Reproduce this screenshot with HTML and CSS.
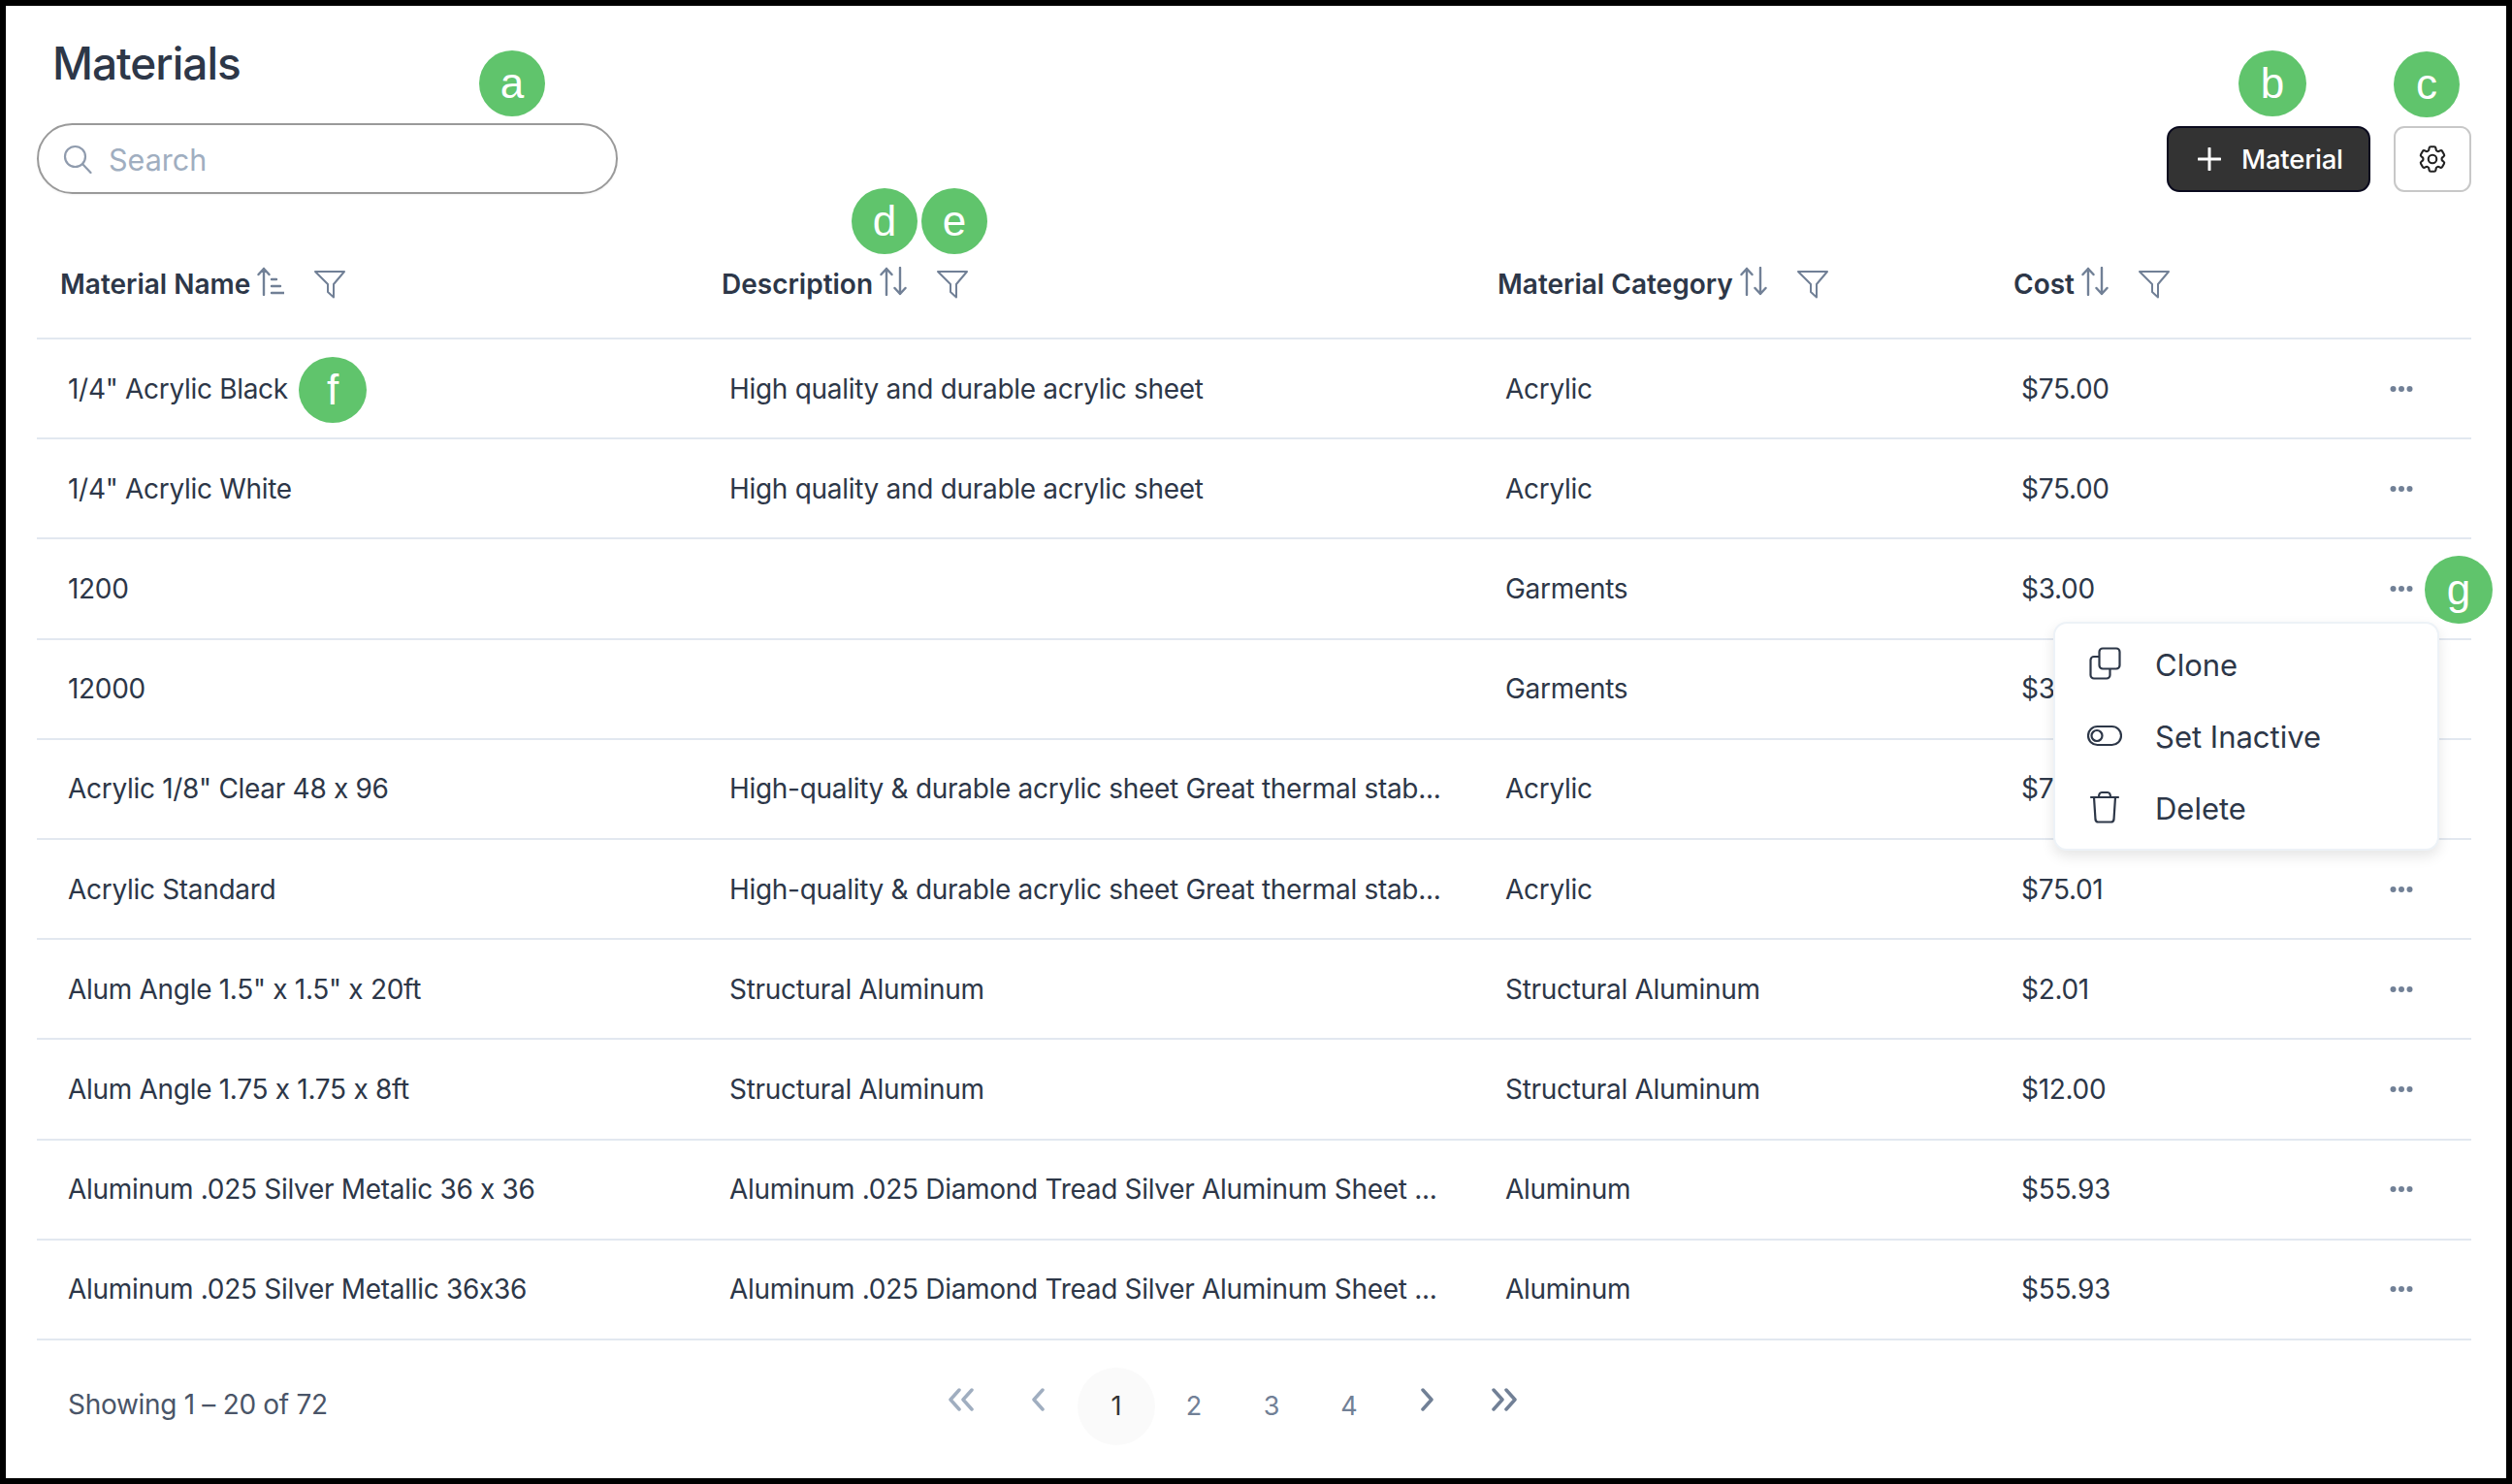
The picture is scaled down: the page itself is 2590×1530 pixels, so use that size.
FILE: index.html
```html
<!DOCTYPE html>
<html lang="en">
<head>
  <meta charset="UTF-8" />
  <title>Materials</title>
  <link rel="stylesheet" href="styles.css">
</head>
<body>
  <svg class="sprites" width="0" height="0">
    <symbol id="i-sort" viewBox="0 0 28 30">
      <path d="M7 29V2M1.500 8L7 2l5.500 6M21 1v27M15.500 22l5.500 6 5.500-6" fill="none" stroke="currentColor" stroke-width="2.400" stroke-linecap="round" stroke-linejoin="round" />
    </symbol>
    <symbol id="i-filter" viewBox="0 0 34 30">
      <path d="M2 2H32L21 15V28.500L15 23V15Z" fill="none" stroke="currentColor" stroke-width="2" stroke-linejoin="round" />
    </symbol>
    <symbol id="i-dots" viewBox="0 0 24 8">
      <circle cx="3.500" cy="4" r="3" fill="currentColor" />
      <circle cx="12" cy="4" r="3" fill="currentColor" />
      <circle cx="20.500" cy="4" r="3" fill="currentColor" />
    </symbol>
  </svg>

  <div class="page">
    <h1 class="title">Materials</h1>

    <div class="toolbar">
      <div class="search">
        <svg class="search-icon" viewBox="0 0 30 30"><circle cx="12.500" cy="12.500" r="10.500" fill="none" stroke="currentColor" stroke-width="2.200" /><path d="M20 20L28.500 29" fill="none" stroke="currentColor" stroke-width="2.200" stroke-linecap="round" /></svg>
        <span class="search-text">Search</span>
      </div>
      <div class="toolbar-actions">
        <button class="btn-add">
          <svg class="plus-icon" viewBox="0 0 24 24"><path d="M12 1V23M1 12H23" fill="none" stroke="currentColor" stroke-width="3" stroke-linecap="round" /></svg>
          Material
        </button>
        <button class="btn-settings">
          <svg class="gear-icon" viewBox="0 0 24 24" fill="none" stroke="currentColor" stroke-width="1.500" stroke-linecap="round" stroke-linejoin="round"><path d="M9.594 3.94c.09-.542.56-.94 1.11-.94h2.593c.55 0 1.02.398 1.11.94l.213 1.281c.063.374.313.686.645.87.074.04.147.083.22.127.324.196.72.257 1.075.124l1.217-.456a1.125 1.125 0 011.37.49l1.296 2.247a1.125 1.125 0 01-.26 1.431l-1.003.827c-.293.24-.438.613-.431.992a6.759 6.759 0 010 .255c-.007.378.138.75.43.99l1.005.828c.424.35.534.954.26 1.43l-1.298 2.247a1.125 1.125 0 01-1.369.491l-1.217-.456c-.355-.133-.75-.072-1.076.124a6.57 6.57 0 01-.22.128c-.331.183-.581.495-.644.869l-.213 1.28c-.09.543-.56.941-1.11.941h-2.594c-.55 0-1.02-.398-1.11-.94l-.213-1.281c-.062-.374-.312-.686-.644-.87a6.52 6.52 0 01-.22-.127c-.325-.196-.72-.257-1.076-.124l-1.217.456a1.125 1.125 0 01-1.369-.49l-1.297-2.247a1.125 1.125 0 01.26-1.431l1.004-.827c.292-.24.437-.613.43-.992a6.932 6.932 0 010-.255c.007-.378-.138-.75-.43-.99l-1.004-.828a1.125 1.125 0 01-.26-1.43l1.297-2.247a1.125 1.125 0 011.37-.491l1.216.456c.356.133.751.072 1.076-.124.072-.044.146-.087.22-.128.332-.183.582-.495.644-.869l.214-1.281z" /><path d="M15 12a3 3 0 11-6 0 3 3 0 016 0z" /></svg>
        </button>
      </div>
    </div>

    <div class="head-row">
      <div class="head-cell">
        <span>Material Name</span>
        <svg class="sort-icon" viewBox="0 0 28 30"><path d="M7 29V2M1.500 8L7 2l5.500 6M15 13h5M15 20h9M15 27h13" fill="none" stroke="currentColor" stroke-width="2.400" stroke-linecap="round" stroke-linejoin="round" /></svg>
        <svg class="filter-icon"><use href="#i-filter" /></svg>
      </div>
      <div class="head-cell">
        <span>Description</span>
        <svg class="sort-icon"><use href="#i-sort" /></svg>
        <svg class="filter-icon"><use href="#i-filter" /></svg>
      </div>
      <div class="head-cell">
        <span>Material Category</span>
        <svg class="sort-icon"><use href="#i-sort" /></svg>
        <svg class="filter-icon"><use href="#i-filter" /></svg>
      </div>
      <div class="head-cell">
        <span>Cost</span>
        <svg class="sort-icon"><use href="#i-sort" /></svg>
        <svg class="filter-icon"><use href="#i-filter" /></svg>
      </div>
      <div></div>
    </div>

    <div class="row">
      <div>1/4" Acrylic Black</div>
      <div>High quality and durable acrylic sheet</div>
      <div>Acrylic</div>
      <div>$75.00</div>
      <svg class="dots"><use href="#i-dots" /></svg>
    </div>
    <div class="row">
      <div>1/4" Acrylic White</div>
      <div>High quality and durable acrylic sheet</div>
      <div>Acrylic</div>
      <div>$75.00</div>
      <svg class="dots"><use href="#i-dots" /></svg>
    </div>
    <div class="row">
      <div>1200</div>
      <div></div>
      <div>Garments</div>
      <div>$3.00</div>
      <svg class="dots"><use href="#i-dots" /></svg>
    </div>
    <div class="row">
      <div>12000</div>
      <div></div>
      <div>Garments</div>
      <div>$3.00</div>
      <svg class="dots"><use href="#i-dots" /></svg>
    </div>
    <div class="row">
      <div>Acrylic 1/8" Clear 48 x 96</div>
      <div>High-quality &amp; durable acrylic sheet Great thermal stab...</div>
      <div>Acrylic</div>
      <div>$75.00</div>
      <svg class="dots"><use href="#i-dots" /></svg>
    </div>
    <div class="row">
      <div>Acrylic Standard</div>
      <div>High-quality &amp; durable acrylic sheet Great thermal stab...</div>
      <div>Acrylic</div>
      <div>$75.01</div>
      <svg class="dots"><use href="#i-dots" /></svg>
    </div>
    <div class="row">
      <div>Alum Angle 1.5" x 1.5" x 20ft</div>
      <div>Structural Aluminum</div>
      <div>Structural Aluminum</div>
      <div>$2.01</div>
      <svg class="dots"><use href="#i-dots" /></svg>
    </div>
    <div class="row">
      <div>Alum Angle 1.75 x 1.75 x 8ft</div>
      <div>Structural Aluminum</div>
      <div>Structural Aluminum</div>
      <div>$12.00</div>
      <svg class="dots"><use href="#i-dots" /></svg>
    </div>
    <div class="row">
      <div>Aluminum .025 Silver Metalic 36 x 36</div>
      <div>Aluminum .025 Diamond Tread Silver Aluminum Sheet ...</div>
      <div>Aluminum</div>
      <div>$55.93</div>
      <svg class="dots"><use href="#i-dots" /></svg>
    </div>
    <div class="row">
      <div>Aluminum .025 Silver Metallic 36x36</div>
      <div>Aluminum .025 Diamond Tread Silver Aluminum Sheet ...</div>
      <div>Aluminum</div>
      <div>$55.93</div>
      <svg class="dots"><use href="#i-dots" /></svg>
    </div>

    <div class="footer">
      <div class="showing">Showing 1 – 20 of 72</div>
      <div class="pager">
        <span class="pg pg-off"><svg class="chev" viewBox="0 0 28 24"><path d="M12 2L3 12l9 10M25 2l-9 10 9 10" /></svg></span>
        <span class="pg pg-off"><svg class="chev" viewBox="0 0 28 24"><path d="M18 2L9 12l9 10" /></svg></span>
        <span class="pg pg-current">1</span>
        <span class="pg">2</span>
        <span class="pg">3</span>
        <span class="pg">4</span>
        <span class="pg"><svg class="chev" viewBox="0 0 28 24"><path d="M10 2l9 10-9 10" /></svg></span>
        <span class="pg"><svg class="chev" viewBox="0 0 28 24"><path d="M3 2l9 10-9 10M16 2l9 10-9 10" /></svg></span>
      </div>
    </div>
  </div>

  <div class="menu">
    <div class="menu-item">
      <svg class="menu-icon" viewBox="0 0 36 36"><rect x="12.500" y="1.500" width="21" height="21" rx="3.500" /><path d="M12 10H7a3.500 3.500 0 0 0-3.500 3.500V29A3.500 3.500 0 0 0 7 32.500h13a3.500 3.500 0 0 0 3.500-3.500V23" /></svg>
      Clone
    </div>
    <div class="menu-item">
      <svg class="menu-icon" viewBox="0 0 36 36"><rect x="1" y="8" width="34" height="19" rx="9.500" /><circle cx="10" cy="17.500" r="5.500" /></svg>
      Set Inactive
    </div>
    <div class="menu-item">
      <svg class="menu-icon" viewBox="0 0 36 36"><path d="M4 7H32M7 7l1.500 23a3 3 0 0 0 3 2.500h13a3 3 0 0 0 3-2.500L29 7M12 7c0-3 1-5 3-5h6c2 0 3 2 3 5" /></svg>
      Delete
    </div>
  </div>

  <span class="badge badge-a">a</span>
  <span class="badge badge-b">b</span>
  <span class="badge badge-c">c</span>
  <span class="badge badge-d">d</span>
  <span class="badge badge-e">e</span>
  <span class="badge badge-f">f</span>
  <span class="badge badge-g">g</span>
</body>
</html>
```

FILE: styles.css
```css
:root {
  --text: #2d3748;
  --muted: #718096;
  --faint: #a0aec0;
  --line: #e2e8f0;
  --green: #60c46c;
}

html, body {
  height: 100%;
}

body {
  margin: 0;
  background: #000;
  font-family: Inter, "Noto Sans", sans-serif;
  font-feature-settings: "calt" 0;
  color: var(--text);
  overflow: hidden;
}

.sprites {
  position: absolute;
}

.page {
  margin: 6px;
  height: 1518px;
  box-sizing: border-box;
  padding: 0 36px 0 32px;
  background: #fff;
}

.title {
  margin: 0;
  padding: 30px 0 0 16px;
  height: 121px;
  box-sizing: border-box;
  font-size: 46px;
  line-height: 58px;
  font-weight: 500;
  letter-spacing: -1px;
}

.toolbar {
  display: flex;
  justify-content: space-between;
  align-items: center;
  height: 73px;
}

.search {
  display: flex;
  align-items: center;
  width: 599px;
  height: 73px;
  box-sizing: border-box;
  padding-left: 25px;
  border: 2px solid #9a9a9a;
  border-radius: 37px;
  box-shadow: 0 1px 2px rgba(0, 0, 0, 0.05);
}

.search-icon {
  width: 30px;
  height: 30px;
  color: #8f9bad;
}

.search-text {
  margin: 1px 0 0 17px;
  font-size: 30.500px;
  color: var(--faint);
}

.toolbar-actions {
  display: flex;
  gap: 24px;
  margin-top: 1px;
}

.btn-add {
  display: flex;
  align-items: center;
  gap: 21px;
  width: 210px;
  height: 68px;
  padding: 0 0 0 30px;
  box-sizing: border-box;
  background: #333;
  border: 2px solid #0a0a1e;
  border-radius: 13px;
  color: #fff;
  font-family: inherit;
  font-size: 27.500px;
  font-weight: 500;
  letter-spacing: -0.2px;
}

.plus-icon {
  width: 24px;
  height: 24px;
}

.btn-settings {
  display: flex;
  align-items: center;
  justify-content: center;
  width: 80px;
  height: 68px;
  padding: 0;
  background: #fff;
  border: 2px solid #c8c8c8;
  border-radius: 11px;
  color: #222;
}

.gear-icon {
  width: 34px;
  height: 34px;
}

.head-row, .row {
  display: grid;
  align-items: center;
  box-sizing: border-box;
  border-bottom: 2px solid var(--line);
}

.head-row {
  grid-template-columns: 682px 800px 532px 348px 148px;
  height: 150px;
  padding-top: 37px;
}

.head-cell {
  display: flex;
  align-items: center;
  padding-left: 24px;
  font-size: 28px;
  font-weight: 600;
}

.sort-icon {
  width: 28px;
  height: 30px;
  margin: -6px 0 0 7px;
  color: var(--muted);
}

.filter-icon {
  width: 34px;
  height: 30px;
  margin-left: 30px;
  color: var(--muted);
}

.row {
  grid-template-columns: 682px 800px 532px 380px 84px;
  height: 103.2px;
  padding-left: 32px;
  font-size: 28px;
  letter-spacing: -0.3px;
}

.row > div {
  margin-right: 32px;
  white-space: nowrap;
}

.dots {
  width: 24px;
  height: 8px;
  color: var(--muted);
}

.footer {
  display: flex;
  align-items: center;
  padding: 28px 0 0 32px;
}

.showing {
  width: 881px;
  margin-top: -3px;
  font-size: 28px;
  letter-spacing: -0.3px;
  color: #4a5568;
}

.pager {
  display: flex;
}

.pg {
  display: flex;
  align-items: center;
  justify-content: center;
  width: 80px;
  height: 80px;
  border-radius: 50%;
  font-size: 27px;
  color: var(--muted);
}

.pg-current {
  background: #fafafa;
  color: #333;
}

.pg-off {
  color: var(--faint);
}

.chev {
  width: 28px;
  height: 24px;
  margin-top: -14px;
  fill: none;
  stroke: currentColor;
  stroke-width: 3.500;
  stroke-linecap: round;
  stroke-linejoin: round;
}

.menu {
  position: absolute;
  left: 2117px;
  top: 641px;
  width: 398px;
  box-sizing: border-box;
  padding: 5px 0;
  background: #fff;
  border: 2px solid #edf2f7;
  border-radius: 14px;
  box-shadow: 0 6px 14px rgba(0, 0, 0, 0.1);
}

.menu-item {
  display: flex;
  align-items: center;
  gap: 34px;
  height: 74px;
  padding-left: 33px;
  font-size: 31px;
}

.menu-icon {
  width: 36px;
  height: 36px;
  fill: none;
  stroke: currentColor;
  stroke-width: 2.200;
  stroke-linecap: round;
  stroke-linejoin: round;
}

.badge {
  position: absolute;
  display: flex;
  align-items: center;
  justify-content: center;
  width: 68px;
  height: 68px;
  border-radius: 50%;
  background: var(--green);
  color: #fff;
  font-family: "Liberation Sans", sans-serif;
  font-size: 44px;
}

.badge-a { left: 494px; top: 52px; }
.badge-b { left: 2308px; top: 52px; width: 70px; }
.badge-c { left: 2468px; top: 53px; }
.badge-d { left: 878px; top: 194px; }
.badge-e { left: 950px; top: 194px; }
.badge-f { left: 308px; top: 368px; width: 70px; }
.badge-g { left: 2500px; top: 573px; width: 70px; height: 70px; }
```
